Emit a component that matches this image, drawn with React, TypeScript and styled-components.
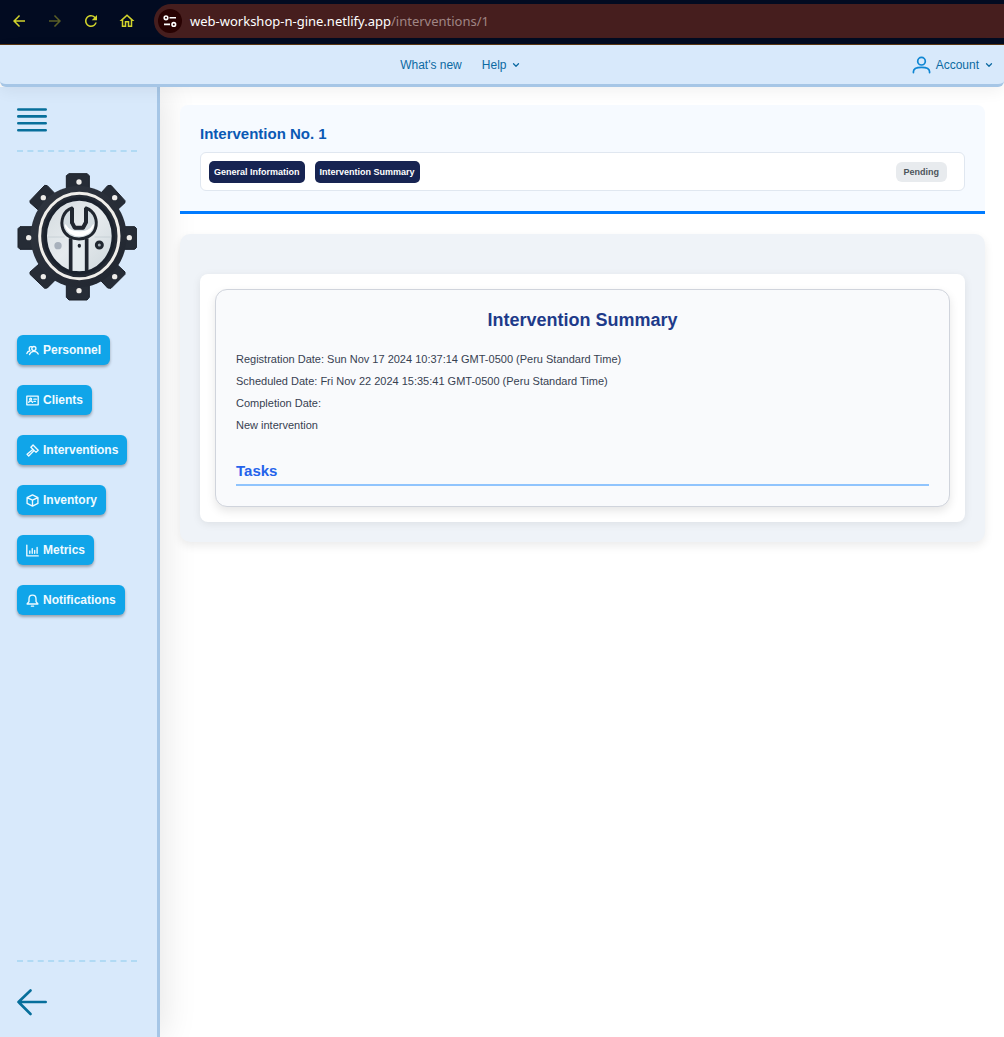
import React from 'react';
import styled, { createGlobalStyle } from 'styled-components';
import { MdArrowBack, MdArrowForward, MdRefresh, MdOutlineHome } from 'react-icons/md';
import { ChevronDown } from 'lucide-react';

const GlobalStyle = createGlobalStyle`
  *, *::before, *::after { box-sizing: border-box; }
  body {
    margin: 0;
    background: #fff;
    font-family: "Liberation Sans", Arial, sans-serif;
  }
  h1, h2, h3, p { margin: 0; }
  button, input { font-family: inherit; }
`;

const Page = styled.div`
  display: flex;
  flex-direction: column;
  min-height: 100vh;
`;

const BrowserBar = styled.div`
  display: flex;
  align-items: center;
  gap: 18px;
  height: 45px;
  padding: 0 0 2px 10px;
  background: #020b21;
  border-bottom: 1px solid #5a3612;
`;

const BrowserButton = styled.button`
  display: flex;
  align-items: center;
  justify-content: center;
  width: 18px;
  height: 18px;
  padding: 0;
  border: 0;
  background: none;
  color: #d2d42c;
  font-size: 18px;

  &:disabled { color: #5b5f26; }
`;

const AddressBar = styled.div`
  display: flex;
  flex: 1;
  align-items: center;
  gap: 8px;
  height: 34px;
  padding-left: 4px;
  border-radius: 17px 0 0 17px;
  background: #461e1e;
`;

const SiteInfo = styled.button`
  display: flex;
  align-items: center;
  justify-content: center;
  width: 24px;
  height: 24px;
  padding: 0;
  border: 0;
  border-radius: 50%;
  background: #280202;
`;

const Address = styled.span`
  font: 13px/20px "Noto Sans", "Open Sans", sans-serif;
  color: #a08685;

  b { font-weight: 400; color: #fff; }
`;

const TopNav = styled.header`
  position: relative;
  display: flex;
  align-items: center;
  height: 42px;
  padding: 0 10px;
  background: #d8e9fb;
  border-bottom: 3px solid #a6c6e6;
  border-radius: 0 0 6px 6px;
  box-shadow: 0 4px 16px rgba(0, 0, 0, 0.06);
`;

const NavLinks = styled.nav`
  display: flex;
  gap: 20px;
  margin: 0 auto;
`;

const navItem = `
  display: flex;
  align-items: center;
  gap: 5px;
  padding: 0;
  border: 0;
  background: none;
  color: #0c6aa2;
  font-size: 12px;
  line-height: 18px;
  text-decoration: none;
`;

const NavLink = styled.a`${navItem}`;
const NavButton = styled.button`${navItem}`;

const Body = styled.div`
  display: flex;
  flex: 1;
`;

const Sidebar = styled.aside`
  display: flex;
  flex-direction: column;
  align-items: flex-start;
  flex: 0 0 160px;
  padding: 19px 20px 20px 17px;
  background: #d8e9fb;
  border-right: 3px solid #a6c6e6;
  box-shadow: 4px 0 32px rgba(0, 0, 0, 0.1);
`;

const IconButton = styled.button`
  display: block;
  height: 28px;
  padding: 0;
  border: 0;
  background: none;

  svg { display: block; }
`;

const Divider = styled.hr<{ $space: number }>`
  width: 100%;
  margin: 16px 0 ${(p) => p.$space}px;
  border: 0;
  border-top: 2px dashed #b1daf4;
`;

const Menu = styled.ul`
  display: flex;
  flex-direction: column;
  align-items: flex-start;
  gap: 20px;
  flex: 1;
  margin: 34px 0 0;
  padding: 0;
  list-style: none;
`;

const MenuLink = styled.a`
  display: flex;
  align-items: center;
  gap: 4px;
  height: 30px;
  padding: 0 9px;
  border-radius: 6px;
  background: #10a5e9;
  color: #effaff;
  font-size: 12px;
  font-weight: 700;
  text-decoration: none;
  box-shadow: 0 2px 3px rgba(0, 0, 0, 0.3);
`;

const Main = styled.main`
  flex: 1;
  min-width: 0;
  padding: 18px 19px 20px 20px;
`;

const TitlePanel = styled.section`
  padding: 20px;
  border-radius: 8px 8px 0 0;
  border-bottom: 3px solid #007bff;
  background: #f6faff;
`;

const Title = styled.h1`
  margin-bottom: 9px;
  color: #0a59b4;
  font-size: 15px;
  line-height: 18px;
`;

const TabBar = styled.div`
  display: flex;
  align-items: center;
  gap: 10px;
  height: 39px;
  padding: 0 17px 0 8px;
  border: 1px solid #e0e7f0;
  border-radius: 6px;
  background: #fff;
`;

const TabButton = styled.button`
  height: 22px;
  padding: 0 5px;
  border: 0;
  border-radius: 5px;
  background: #172452;
  color: #fff;
  font-size: 9px;
  font-weight: 700;
`;

const Status = styled.span`
  margin-left: auto;
  padding: 0 8px;
  border-radius: 6px;
  background: #e8ebee;
  color: #4e555c;
  font-size: 9px;
  font-weight: 700;
  line-height: 20px;
`;

const ContentPanel = styled.section`
  margin-top: 20px;
  padding: 40px 20px 20px;
  border-radius: 10px;
  background: #eff3f8;
  box-shadow: 0 4px 10px rgba(0, 0, 0, 0.08);
`;

const Card = styled.div`
  padding: 15px;
  border-radius: 8px;
  background: #fff;
  box-shadow: 0 2px 8px rgba(0, 0, 0, 0.08);
`;

const Summary = styled.article`
  padding: 20px;
  border: 1px solid #d0d4dc;
  border-radius: 12px;
  background: #f9fafc;
  box-shadow: 0 4px 10px rgba(0, 0, 0, 0.1);
`;

const SummaryTitle = styled.h2`
  margin-bottom: 18px;
  color: #1e3a8a;
  font-size: 18px;
  line-height: 20px;
  text-align: center;
`;

const Detail = styled.p`
  color: #374151;
  font-size: 11px;
  line-height: 22px;
`;

const TasksTitle = styled.h3`
  margin-top: 25px;
  padding-bottom: 3px;
  border-bottom: 2px solid #90c4fd;
  color: #2563eb;
  font-size: 15px;
  line-height: 20px;
`;

const MenuIcon = ({ children }: { children: React.ReactNode }) => (
  <svg
    width="13"
    height="13"
    viewBox="0 0 24 24"
    fill="none"
    stroke="currentColor"
    strokeWidth="2.5"
    strokeLinecap="round"
    strokeLinejoin="round"
    aria-hidden="true"
  >
    {children}
  </svg>
);

const PersonIcon = () => (
  <svg width="19" height="18" viewBox="0 0 20 18" fill="none" stroke="#0f86d3" strokeWidth="1.8" strokeLinecap="round" aria-hidden="true">
    <circle cx="10" cy="5" r="4" />
    <path d="M1.5 17v-1c0-3 3.500-4.500 8.500-4.500s8.500 1.500 8.500 4.500v1" />
  </svg>
);

const SiteIcon = () => (
  <svg width="14" height="12" viewBox="0 0 14 12" fill="none" stroke="#fff" strokeWidth="1.6" aria-hidden="true">
    <circle cx="3" cy="2.8" r="1.8" />
    <path d="M6.500 2.800H13M1 9.400h6" />
    <circle cx="10.8" cy="9.4" r="1.8" />
  </svg>
);

const bolts = [
  { x: 237, y: 67 },
  { x: 344, y: 114 },
  { x: 388, y: 234 },
  { x: 344, y: 351 },
  { x: 237, y: 393 },
  { x: 130, y: 351 },
  { x: 86, y: 234 },
  { x: 130, y: 114 },
];

const GearLogo = () => (
  <svg width="120" height="128" viewBox="51 40 360 384" role="img" aria-label="Workshop gear logo">
    <defs>
      <linearGradient id="plate" x1="0" y1="0" x2="1" y2="1">
        <stop offset="0" stopColor="#d3dade" />
        <stop offset="0.5" stopColor="#e6ebee" />
        <stop offset="1" stopColor="#cdd6db" />
      </linearGradient>
      <linearGradient id="body" x1="0" y1="0" x2="1" y2="1">
        <stop offset="0" stopColor="#303640" />
        <stop offset="1" stopColor="#20252f" />
      </linearGradient>
    </defs>
    <g fill="#262c36" stroke="#1b2029" strokeWidth="3" strokeLinejoin="round">
      <path d="M199 48l8-6h54l7 6v45h-69zM199 413l8 8h54l7-8v-45h-69zM54 207l6-6h44v68H60l-6-6zM410 207l-6-6h-44v68h44l6-6z" />
      <path d="M90 123l44-46 8 1 32 33-48 50-36-32zM375 123l-42-46-10 1-30 33 48 50 34-32zM90 344l44 42 8-1 32-32-48-48-36 32zM375 344l-42 42-10-1-30-32 48-48 34 32z" />
      <ellipse cx="236" cy="231" rx="144" ry="152" fill="url(#body)" stroke="none" />
    </g>
    <ellipse cx="238" cy="229" rx="119" ry="128" fill="#252b35" stroke="#f0eeea" strokeWidth="9" />
    <ellipse cx="238" cy="229" rx="102" ry="111" fill="url(#plate)" stroke="#1b222d" strokeWidth="10" />
    <path d="M143 232h51M284 232h48" stroke="#c0c8ce" strokeWidth="2" />
    <path d="M211 238V333h52V238z" fill="#e4ebee" />
    <path d="M212 335V236M260 335V236" stroke="#20262f" strokeWidth="11" />
    <path d="M216 145C190 153 180 184 189 209c7 19 27 29 48 29s43-11 49-31c8-24-1-52-28-62v43l-9 16h-25l-8-15z" fill="#d3dce1" stroke="#20262f" strokeWidth="9" strokeLinejoin="round" />
    <path d="M196 196c7 42 76 42 84 0-14 28-68 28-84 0z" fill="#fff" stroke="#fff" strokeWidth="4" strokeLinejoin="round" />
    <path d="M216 145v44l8 15h25l9-16v-43" fill="none" stroke="#20262f" strokeWidth="12" strokeLinejoin="round" />
    <ellipse cx="238" cy="258" rx="5" ry="6" fill="#20262f" />
    <circle cx="174" cy="258" r="11" fill="#a8b1bc" />
    <circle cx="298" cy="256" r="9" fill="#a5aeb5" stroke="#20262f" strokeWidth="9" />
    {bolts.map(({ x, y }) => (
      <circle key={`${x}-${y}`} cx={x} cy={y} r="8" fill="#eeece9" />
    ))}
  </svg>
);

const menuItems = [
  {
    label: 'Personnel',
    icon: (
      <>
        <circle cx="14.5" cy="8.5" r="3.8" />
        <path d="M6.500 19.500c1.500-4 4.500-6 8-6s6.500 1.500 8 5M10 5C7.500 4 5 6.500 6.500 10.500M1.500 17.500c1-3 3-4.500 6-5" />
      </>
    ),
  },
  {
    label: 'Clients',
    icon: (
      <>
        <rect x="1.5" y="4" width="21" height="16" />
        <circle cx="8.5" cy="9.5" r="1.8" />
        <path d="M5 15.500c1-3.500 6-3.500 7 0M14.500 9.500H19M14.500 13.500h3" />
      </>
    ),
  },
  {
    label: 'Interventions',
    icon: <path d="M13 2l9.500 9.500-4 4L9 6zM12 10.500L2 19l3 3 9.500-9.500" />,
  },
  {
    label: 'Inventory',
    icon: <path d="M12 1.500l10 5v11l-10 5-10-5v-11zM2 6.500l10 5 10-5M12 11.500v11" />,
  },
  {
    label: 'Metrics',
    icon: <path d="M1.500 2v20h21M7 17v-4M11.500 17V8.500M16 17v-5M20.500 17V6.500" />,
  },
  {
    label: 'Notifications',
    icon: <path d="M12 2c-4 0-6.500 3-6.500 7v5L2 18.500h20L18.500 14V9c0-4-2.500-7-6.500-7zM10 22.500h4" />,
  },
];

const details = [
  'Registration Date: Sun Nov 17 2024 10:37:14 GMT-0500 (Peru Standard Time)',
  'Scheduled Date: Fri Nov 22 2024 15:35:41 GMT-0500 (Peru Standard Time)',
  'Completion Date:',
  'New intervention',
];

export default function App() {
  return (
    <Page>
      <GlobalStyle />
      <BrowserBar>
        <BrowserButton aria-label="Back"><MdArrowBack /></BrowserButton>
        <BrowserButton aria-label="Forward" disabled><MdArrowForward /></BrowserButton>
        <BrowserButton aria-label="Reload"><MdRefresh /></BrowserButton>
        <BrowserButton aria-label="Home"><MdOutlineHome /></BrowserButton>
        <AddressBar>
          <SiteInfo aria-label="Site information"><SiteIcon /></SiteInfo>
          <Address><b>web-workshop-n-gine.netlify.app</b>/interventions/1</Address>
        </AddressBar>
      </BrowserBar>

      <TopNav>
        <NavLinks>
          <NavLink href="#news">What's new</NavLink>
          <NavButton>Help <ChevronDown size={10} strokeWidth={3} /></NavButton>
        </NavLinks>
        <NavButton><PersonIcon />Account <ChevronDown size={10} strokeWidth={3} /></NavButton>
      </TopNav>

      <Body>
        <Sidebar>
          <IconButton aria-label="Toggle menu">
            <svg width="30" height="26" viewBox="0 0 30 26" stroke="#076f9b" strokeWidth="2.6" strokeLinecap="round">
              <path d="M1.300 2.500h27.400M1.300 9.400h27.400M1.300 16.300h27.400M1.300 23.200h27.400" />
            </svg>
          </IconButton>
          <Divider $space={21} />
          <GearLogo />
          <Menu>
            {menuItems.map(({ label, icon }) => (
              <li key={label}>
                <MenuLink href={`#${label.toLowerCase()}`}>
                  <MenuIcon>{icon}</MenuIcon>
                  {label}
                </MenuLink>
              </li>
            ))}
          </Menu>
          <Divider $space={27} />
          <IconButton aria-label="Go back">
            <svg width="30" height="28" viewBox="0 0 30 28" fill="none" stroke="#076f9b" strokeWidth="2.6" strokeLinecap="round" strokeLinejoin="round">
              <path d="M28.700 13H1.500M13.500 1.500L1.500 13l12 12" />
            </svg>
          </IconButton>
        </Sidebar>

        <Main>
          <TitlePanel>
            <Title>Intervention No. 1</Title>
            <TabBar>
              <TabButton>General Information</TabButton>
              <TabButton>Intervention Summary</TabButton>
              <Status>Pending</Status>
            </TabBar>
          </TitlePanel>

          <ContentPanel>
            <Card>
              <Summary>
                <SummaryTitle>Intervention Summary</SummaryTitle>
                {details.map((line) => <Detail key={line}>{line}</Detail>)}
                <TasksTitle>Tasks</TasksTitle>
              </Summary>
            </Card>
          </ContentPanel>
        </Main>
      </Body>
    </Page>
  );
}
